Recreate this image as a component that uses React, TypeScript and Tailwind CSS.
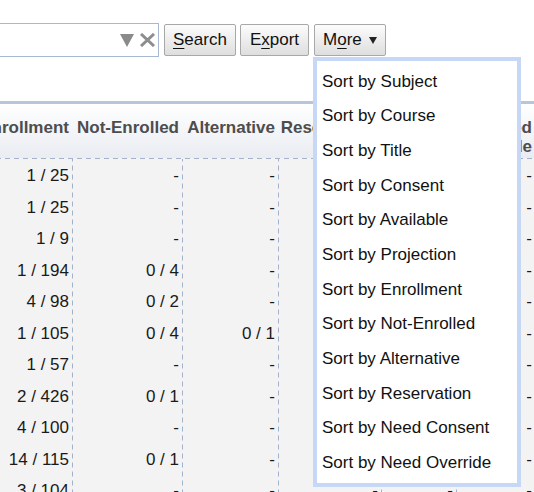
import React from "react";

type Col = { title: string; width: number; values: string[] };

const dash = (n: number) => Array.from({ length: n }, () => "-");

const columns: Col[] = [
  {
    title: "Enrollment",
    width: 113,
    values: ["1 / 25", "1 / 25", "1 / 9", "1 / 194", "4 / 98", "1 / 105", "1 / 57", "2 / 426", "4 / 100", "14 / 115", "3 / 104"],
  },
  {
    title: "Not-Enrolled",
    width: 110,
    values: ["-", "-", "-", "0 / 4", "0 / 2", "0 / 4", "-", "0 / 1", "-", "0 / 1", "-"],
  },
  {
    title: "Alternative",
    width: 96,
    values: ["-", "-", "-", "-", "-", "0 / 1", "-", "-", "-", "-", "-"],
  },
  { title: "Reservation", width: 103, values: dash(11) },
  { title: "Need Consent", width: 75, values: dash(11) },
  { title: "Need Override", width: 79, values: dash(11) },
];

const sortItems = [
  "Subject",
  "Course",
  "Title",
  "Consent",
  "Available",
  "Projection",
  "Enrollment",
  "Not-Enrolled",
  "Alternative",
  "Reservation",
  "Need Consent",
  "Need Override",
];

const btn =
  "h-[32px] mt-[1px] border border-[#a8a8a8] rounded-[2px] bg-linear-to-b from-[#fcfcfc] to-[#dedede] text-[17px] text-[#111] flex items-center";

export default function App() {
  return (
    <div
      className="relative w-[534px] h-[492px] overflow-hidden bg-white"
      style={{ fontFamily: '"Liberation Sans", Arial, sans-serif' }}
    >
      {/* toolbar */}
      <div className="flex items-start gap-[4px] pt-[23px]">
        <div className="-ml-[41px] mr-[1px] w-[200px] h-[34px] border border-[#a9b8d1] bg-white flex items-center justify-end gap-[5px] pr-[2px]">
          <svg width="14" height="13" viewBox="0 0 14 13">
            <polygon points="0,0 14,0 7,13" fill="#8a8a8a" />
          </svg>
          <svg width="17" height="14" viewBox="0 0 17 14">
            <path d="M2 1 L15 13 M15 1 L2 13" stroke="#8d8d8d" strokeWidth="3" />
          </svg>
        </div>
        <button className={btn + " px-[8px]"}>
          <span>
            <u className="underline-offset-[3px]">S</u>earch
          </span>
        </button>
        <button className={btn + " px-[9px]"}>
          <span>
            E<u className="underline-offset-[3px]">x</u>port
          </span>
        </button>
        <button className={btn + " px-[8px] ml-[1px]"}>
          <span>
            M<u className="underline-offset-[3px]">o</u>re
          </span>
          <svg className="ml-[7px]" width="8" height="7" viewBox="0 0 8 7">
            <polygon points="0,0 8,0 4,7" fill="#222" />
          </svg>
        </button>
      </div>

      {/* table */}
      <div className="mt-[44px] -ml-[40px] border-t-[3px] border-[#b8c6db]">
        <div className="flex h-[54px] bg-linear-to-b from-white to-[#e9ecf1]">
          {columns.map((c) => (
            <div
              key={c.title}
              className="shrink-0 pt-[14px] pr-[4px] text-right font-bold text-[17px] leading-[19px] text-[#4d4d4d]"
              style={{ width: c.width }}
            >
              {c.title}
            </div>
          ))}
        </div>
        <div className="h-[1px] bg-[#f3f3f3] bg-[linear-gradient(to_right,#a3b1c9_5px,transparent_5px)] bg-[length:9px_1px] bg-repeat-x" />
        <div className="flex bg-[#f3f3f3] h-[400px]">
          {columns.map((c) => (
            <div
              key={c.title}
              className="shrink-0 pt-[1px] bg-[linear-gradient(to_bottom,#a3b1c9_5px,transparent_5px)] bg-[length:1px_9px] bg-right bg-repeat-y"
              style={{ width: c.width }}
            >
              {c.values.map((v, i) => (
                <div
                  key={i}
                  className="h-[31.5px] flex items-center justify-end pr-[4px] text-[17px] text-[#1a1a1a]"
                >
                  {v}
                </div>
              ))}
            </div>
          ))}
        </div>
      </div>

      {/* dropdown menu */}
      <div className="absolute left-[313px] top-[57px] w-[208px] border-[4px] border-[#c6d8f6] bg-white py-[3px]">
        {sortItems.map((s) => (
          <div key={s} className="h-[34.7px] flex items-center pl-[5px] text-[17px] text-[#111]">
            Sort by {s}
          </div>
        ))}
      </div>
    </div>
  );
}
